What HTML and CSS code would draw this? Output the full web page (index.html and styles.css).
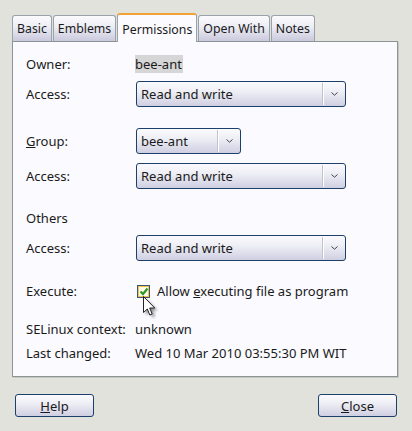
FILE: index.html
```html
<!DOCTYPE html>
<html lang="en">
<head>
    <meta charset="UTF-8">
    <title>Permissions</title>
    <link rel="stylesheet" href="styles.css">
</head>
<body>
    <div class="dialog">
        <div class="tabs">
            <div class="tab">Basic</div>
            <div class="tab">Emblems</div>
            <div class="tab active">Permissions</div>
            <div class="tab">Open With</div>
            <div class="tab">Notes</div>
        </div>
        <div class="panel">
            <div class="row r-owner">
                <span class="label">Owner:</span>
                <span class="owner">bee-ant</span>
            </div>
            <div class="row r-access1">
                <span class="label">Access:</span>
                <div class="combo wide"><span class="combo-text">Read and write</span><span class="combo-arrow"><svg width="7" height="4" viewBox="0 0 7 4"><path d="M0.5 0.5 L3.5 3.2 L6.5 0.5" fill="none" stroke="#444" stroke-width="1"/></svg></span></div>
            </div>
            <div class="row r-group">
                <span class="label"><u>G</u>roup:</span>
                <div class="combo narrow"><span class="combo-text">bee-ant</span><span class="combo-arrow"><svg width="7" height="4" viewBox="0 0 7 4"><path d="M0.5 0.5 L3.5 3.2 L6.5 0.5" fill="none" stroke="#444" stroke-width="1"/></svg></span></div>
            </div>
            <div class="row r-access2">
                <span class="label">Access:</span>
                <div class="combo wide"><span class="combo-text">Read and write</span><span class="combo-arrow"><svg width="7" height="4" viewBox="0 0 7 4"><path d="M0.5 0.5 L3.5 3.2 L6.5 0.5" fill="none" stroke="#444" stroke-width="1"/></svg></span></div>
            </div>
            <div class="row r-others">
                <span class="label">Others</span>
            </div>
            <div class="row r-access3">
                <span class="label">Access:</span>
                <div class="combo wide"><span class="combo-text">Read and write</span><span class="combo-arrow"><svg width="7" height="4" viewBox="0 0 7 4"><path d="M0.5 0.5 L3.5 3.2 L6.5 0.5" fill="none" stroke="#444" stroke-width="1"/></svg></span></div>
            </div>
            <div class="row r-exec">
                <span class="label">Execute:</span>
                <div class="check-wrap">
                    <span class="checkbox"><svg width="10" height="9" viewBox="0 0 10 9"><path d="M1.5 4.5 L4 7 L8.5 1.5" fill="none" stroke="#2a9a2a" stroke-width="2.2"/></svg></span>
                    <span class="check-label">Allow <u>e</u>xecuting file as program</span>
                    <svg class="cursor" width="16" height="24" viewBox="0 0 16 24">
                        <defs>
                            <filter id="sh" x="-50%" y="-50%" width="200%" height="200%"><feGaussianBlur stdDeviation="1.6"/></filter>
                        </defs>
                        <path d="M3 3 L3 19 L7 15.5 L9.5 21.5 L12 20.5 L9.5 14.5 L14.5 14.5 Z" fill="#000" opacity="0.45" filter="url(#sh)"/>
                        <path d="M0.5 0.5 L0.5 16.5 L4.3 13 L6.8 19 L9.2 18 L6.7 12 L11.8 12 Z" fill="#fff" stroke="#222" stroke-width="1" stroke-linejoin="round"/>
                    </svg>
                </div>
            </div>
            <div class="row r-selinux">
                <span class="label">SELinux context:</span>
                <span>unknown</span>
            </div>
            <div class="row r-changed">
                <span class="label">Last changed:</span>
                <span>Wed 10 Mar 2010 03:55:30 PM WIT</span>
            </div>
        </div>
        <div class="buttons">
            <button class="btn"><u>H</u>elp</button>
            <button class="btn"><u>C</u>lose</button>
        </div>
    </div>
</body>
</html>
```
FILE: styles.css
```css
body {
    margin: 0;
    background-color: #e2e2dd;
    font-family: "Noto Sans", "Open Sans", sans-serif;
    font-size: 13px;
    color: #1a1a1a;
}
.dialog {
    width: 386px;
    padding: 12px 0 0 12px;
}
.tabs {
    display: flex;
    align-items: flex-end;
    height: 29px;
    font-size: 12.3px;
}
.tab {
    height: 26px;
    box-sizing: border-box;
    padding: 0 4px;
    margin-right: 1px;
    line-height: 26px;
    border: 1px solid #99a1aa;
    border-bottom: none;
    border-radius: 3px 3px 0 0;
    background: linear-gradient(#fbfbfe, #ececf4 45%, #c9c9dd);
}
.tab.active {
    height: 29px;
    line-height: 30px;
    background: #fafaff;
    border-top: 2px solid #f0a232;
    position: relative;
    top: 1px;
}
.panel {
    height: 334px;
    border: 1px solid #8e9398;
    box-shadow: 1px 1px 0 #c4c8c0;
    background-color: #fafaff;
    padding: 0 0 0 13px;
}
.row {
    display: flex;
    align-items: center;
    height: 18px;
}
.label {
    width: 109px;
    flex-shrink: 0;
}
.owner {
    background-color: #d6d6d6;
    padding: 0 1px 0 0;
    line-height: 18px;
}
.r-owner { margin-top: 13px; }
.r-access1 { margin-top: 8px; height: 26px; }
.r-group { margin-top: 21px; height: 26px; }
.r-access2 { margin-top: 9px; height: 26px; }
.r-others { margin-top: 20px; }
.r-access3 { margin-top: 8px; height: 26px; }
.r-exec { margin-top: 21px; }
.r-selinux { margin-top: 20px; }
.r-changed { margin-top: 6px; }
.combo {
    display: flex;
    align-items: stretch;
    height: 26px;
    box-sizing: border-box;
    margin-left: 1px;
    border: 1px solid #1d3f6b;
    border-radius: 3px;
    background: linear-gradient(#fbfbfe, #ececf4 45%, #cfcfe2);
}
.combo.wide { width: 210px; }
.combo.narrow { width: 105px; }
.combo-text {
    flex: 1;
    padding-left: 4px;
    line-height: 24px;
}
.combo-arrow {
    width: 22px;
    display: flex;
    align-items: center;
    justify-content: center;
    border-left: 1px solid #c2c2cc;
    box-shadow: inset 1px 0 0 #ffffff;
    margin: 1px 0;
}
.check-wrap {
    position: relative;
    display: flex;
    align-items: center;
}
.checkbox {
    width: 13px;
    height: 13px;
    box-sizing: border-box;
    margin-left: 2px;
    margin-right: 7px;
    border: 1px solid #3b5670;
    background: #fffbe8;
    box-shadow: inset 0 0 0 1px #f3c44c;
    display: flex;
    align-items: center;
    justify-content: center;
}
.cursor {
    position: absolute;
    left: 8px;
    top: 14px;
}
.buttons {
    display: flex;
    justify-content: space-between;
    margin-top: 17px;
    padding: 0 1px 0 3px;
}
.btn {
    width: 79px;
    height: 23px;
    font-family: inherit;
    font-size: 13px;
    color: #1a1a1a;
    border: 1px solid #1d3f6b;
    border-radius: 3px;
    background: linear-gradient(#fbfbfe, #ececf4 45%, #cfcfe2);
    padding: 0;
}
```
